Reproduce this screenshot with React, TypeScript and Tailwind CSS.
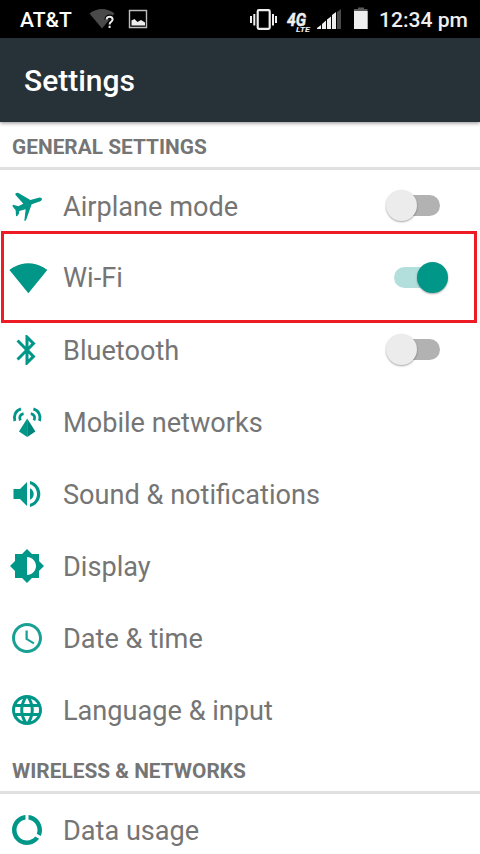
import type { ReactNode } from 'react';
import clsx from 'clsx';

type SettingsItem = {
  label: string;
  icon: ReactNode;
  enabled?: boolean;
  highlighted?: boolean;
};

// 24-unit glyph drawn at 36px
function Icon({ children }: { children: ReactNode }) {
  return (
    <svg viewBox="0 0 24 24" className="h-9 w-9 overflow-visible" fill="currentColor">
      {children}
    </svg>
  );
}

const generalItems: SettingsItem[] = [
  {
    label: 'Airplane mode',
    enabled: false,
    icon: (
      <svg viewBox="0 0 108 108" className="h-9 w-9" fill="currentColor">
        <path d="M20 16 27 14 64 36 89 29Q98 27 99 33 99 37 94 40L68 49 51 97 46 99 50 64 31 69Q31 80 24 85L21 84 20 67 10 54 12 50 28 55 43 47 19 20z" />
      </svg>
    ),
  },
  {
    label: 'Wi-Fi',
    enabled: true,
    highlighted: true,
    icon: (
      <Icon>
        <path d="M12.9 22.1 25.5 6.7C25 6.3 20.1 2.2 12.9 2.2S.8 6.3.3 6.7z" />
      </Icon>
    ),
  },
  {
    label: 'Bluetooth',
    enabled: false,
    icon: (
      <Icon>
        <path d="M17.71 7.71L12 2h-1v7.59L6.41 5 5 6.41 10.59 12 5 17.59 6.41 19 11 14.41V22h1l5.71-5.71-4.3-4.29 4.3-4.29zM13 5.83l1.88 1.88L13 9.59V5.83zm1.88 10.46L13 18.17v-3.76l1.88 1.88z" />
      </Icon>
    ),
  },
  {
    label: 'Mobile networks',
    icon: (
      <svg viewBox="0 0 36 36" className="h-9 w-9" fill="none">
        <path d="M18.200 14.500 10 27.500 18.200 33z" fill="#009688" />
        <path d="M18.200 14.500 26.400 27.500 18.200 33z" fill="#00857a" />
        <path
          d="M12 4.900C6.500 6.600 4.300 11.800 5.900 17M14.600 9.600C10.700 10.400 10 13.400 11.400 16.400M24.400 4.900C29.900 6.600 32.100 11.800 30.500 17M21.800 9.600C25.700 10.400 26.400 13.400 25 16.400"
          stroke="currentColor"
          strokeWidth="2.800"
        />
      </svg>
    ),
  },
  {
    label: 'Sound & notifications',
    icon: (
      <svg viewBox="0 0 36 36" className="h-9 w-9" fill="currentColor">
        <path d="M4.500 13v10h6.500L18 30V6l-7 7zM21 12.200v11.600c2.400-1.200 3.700-3.300 3.700-5.800s-1.300-4.600-3.700-5.800zM21 5v3.200c4.300 1.200 7 5.100 7 9.800s-2.700 8.600-7 9.800V31c6-1.400 10.300-6.800 10.300-13S27 6.400 21 5z" />
      </svg>
    ),
  },
  {
    label: 'Display',
    icon: (
      <Icon>
        <path d="M20 15.310L23.310 12 20 8.690V4h-4.690L12 .690 8.690 4H4v4.690L.690 12 4 15.310V20h4.690L12 23.310 15.310 20H20v-4.690zM12 18V6c3.310 0 6 2.690 6 6s-2.690 6-6 6z" />
      </Icon>
    ),
  },
  {
    label: 'Date & time',
    icon: (
      <Icon>
        <path
          fillOpacity=".9"
          d="M11.990 2C6.470 2 2 6.480 2 12s4.470 10 9.990 10C17.520 22 22 17.520 22 12S17.520 2 11.990 2zM12 20c-4.420 0-8-3.580-8-8s3.580-8 8-8 8 3.580 8 8-3.580 8-8 8zm.5-13H11v6l5.250 3.150.75-1.230-4.500-2.670z"
        />
      </Icon>
    ),
  },
  {
    label: 'Language & input',
    icon: (
      <Icon>
        <path d="M11.990 2C6.470 2 2 6.480 2 12s4.470 10 9.990 10C17.520 22 22 17.520 22 12S17.520 2 11.990 2zm6.930 6h-2.950c-.32-1.250-.78-2.450-1.380-3.560 1.840.63 3.370 1.910 4.330 3.560zM12 4.040c.83 1.200 1.480 2.530 1.910 3.960h-3.820c.43-1.430 1.080-2.760 1.910-3.960zM4.260 14C4.100 13.360 4 12.690 4 12s.1-1.360.26-2h3.380c-.08.66-.14 1.320-.14 2 0 .68.06 1.340.14 2H4.260zm.82 2h2.950c.32 1.250.78 2.450 1.380 3.560-1.840-.63-3.370-1.900-4.330-3.560zm2.950-8H5.080c.96-1.660 2.490-2.930 4.330-3.560C8.810 5.550 8.350 6.750 8.030 8zM12 19.960c-.83-1.200-1.480-2.530-1.910-3.960h3.820c-.43 1.430-1.080 2.760-1.910 3.960zM14.340 14H9.660c-.09-.66-.16-1.320-.16-2 0-.68.07-1.350.16-2h4.680c.09.65.16 1.320.16 2 0 .68-.07 1.340-.16 2zm.25 5.560c.6-1.110 1.060-2.310 1.380-3.560h2.950c-.96 1.650-2.490 2.930-4.330 3.560zM16.360 14c.08-.66.14-1.320.14-2 0-.68-.06-1.340-.14-2h3.380c.16.64.26 1.310.26 2s-.1 1.360-.26 2h-3.380z" />
      </Icon>
    ),
  },
];

const wirelessItems: SettingsItem[] = [
  {
    label: 'Data usage',
    icon: (
      <Icon>
        <path d="M13 2.050v3.030c3.390.49 6 3.390 6 6.920 0 .9-.18 1.750-.48 2.540l2.600 1.530c.56-1.240.88-2.620.88-4.070 0-5.180-3.950-9.450-9-9.950zM12 19c-3.870 0-7-3.130-7-7 0-3.530 2.610-6.430 6-6.920V2.050c-5.060.5-9 4.760-9 9.950 0 5.520 4.470 10 9.990 10 3.310 0 6.240-1.610 8.060-4.090l-2.600-1.530C16.170 17.980 14.210 19 12 19z" />
      </Icon>
    ),
  },
];

function Toggle({ on }: { on: boolean }) {
  return (
    <div
      className={clsx('mb-px flex h-[31px] w-[62px] items-center', on ? 'justify-end' : 'justify-start')}
    >
      <div className={clsx('h-[21px] w-[46px] rounded-full', on ? '-mr-[23px] bg-[#b2dfdb]' : 'order-2 -ml-[23px] bg-[#b2b2b2]')} />
      <div
        className={clsx(
          'z-10 h-[31px] w-[31px] shrink-0 rounded-full shadow-[0_1px_2px_rgba(0,0,0,0.35)]',
          on ? 'bg-[#009688]' : 'bg-[#ececec]'
        )}
      />
    </div>
  );
}

function SettingsRow({ item }: { item: SettingsItem }) {
  return (
    <li className="relative flex h-[72px] shrink-0 items-center pr-8 pl-[9px] text-[#009688]">
      {item.icon}
      <span
        className={clsx(
          'ml-[18px] flex-1 text-[27.13px] leading-8 text-[#757575]',
          !item.highlighted && 'pt-0.5'
        )}
      >
        {item.label}
      </span>
      {item.enabled !== undefined && <Toggle on={item.enabled} />}
      {item.highlighted && (
        <div className="absolute -top-[11px] left-px h-[92px] w-[476px] border-3 border-[#ed1c24]" />
      )}
    </li>
  );
}

function SettingsSection({ title, items }: { title: string; items: SettingsItem[] }) {
  return (
    <section className="shrink-0">
      <h2 className="flex h-12 items-center border-b-3 border-[#e0e0e0] pt-[5px] pl-3 text-[20.85px] leading-6 font-bold text-[#757575]">
        {title}
      </h2>
      <ul>
        {items.map((item) => (
          <SettingsRow key={item.label} item={item} />
        ))}
      </ul>
    </section>
  );
}

function StatusBar() {
  return (
    <div className="flex h-[38px] shrink-0 items-center bg-black pr-3 pl-5 text-white">
      <span className="w-[68px] pt-px text-[21px] leading-6 font-medium">AT&T</span>
      <svg viewBox="0 0 62 38" className="h-[38px] w-[62px]">
        <path d="M14 28.500 1.500 13.500C9 7.500 19 7.500 26.500 13.500z" fill="#4a4a4a" />
        <path
          d="M18.600 19.500C18.600 15.700 24.600 15.900 24.600 19.500C24.600 21.900 21.600 21.800 21.600 24.400M21.600 25.800v2.200"
          fill="none"
          stroke="#000"
          strokeWidth="4.500"
        />
        <path
          d="M18.600 19.500C18.600 15.700 24.600 15.900 24.600 19.500C24.600 21.900 21.600 21.800 21.600 24.400M21.600 25.800v2.200"
          fill="none"
          stroke="#eee"
          strokeWidth="2"
        />
        <path d="M41.500 10.500h17v17h-17z" fill="none" stroke="#bdbdbd" strokeWidth="1.400" />
        <path d="M43.500 25.500v-5l3-1.500 3 3 3.500-2 4 2.500v3z" fill="#eee" />
      </svg>
      <svg viewBox="0 0 120 38" className="ml-auto h-[38px] w-[120px]" fill="#eee">
        <rect x="7.700" y="10.200" width="12" height="18.600" rx="1.200" fill="none" stroke="#eee" strokeWidth="2.200" />
        <path d="M0 16h2v7H0zM3.300 14h2v11.500h-2zM22 14h2v11.500h-2zM25 16h2v7h-2z" />
        <text
          x="37"
          y="25.500"
          fontSize="18.500"
          fontWeight="700"
          fontStyle="italic"
          stroke="#eee"
          strokeWidth=".5"
          textLength="19"
          lengthAdjust="spacingAndGlyphs"
        >
          4G
        </text>
        <text x="46" y="32" fontSize="7.500" fontWeight="700" fontStyle="italic" textLength="14" lengthAdjust="spacingAndGlyphs">
          LTE
        </text>
        <path d="M67 29v-1l4-3v4zM72 29v-5l4-3.500V29zM77 29v-9.500l4-3V29zM82 29V15l4-3v17z" />
        <path d="M87 29V12l4-3v20z" fill="#4a4a4a" />
        <path d="M108 7.500h6V9h3.500v2H104V9h4z" fill="#5a5a5a" />
        <path d="M104 11h13.700v18H104z" />
      </svg>
      <span className="ml-[9px] w-[89px] pt-px text-[21.1px] leading-6 font-medium whitespace-nowrap text-[#eee]">12:34 pm</span>
    </div>
  );
}

export default function App() {
  return (
    <div className="flex h-[854px] w-[480px] flex-col overflow-hidden bg-white font-['Roboto',sans-serif]">
      <StatusBar />
      <header className="z-10 flex h-[84px] shrink-0 items-center bg-[#263238] pl-6 shadow-[0_1px_4px_rgba(0,0,0,0.45)]">
        <h1 className="text-[30px] font-medium text-white">Settings</h1>
      </header>
      <main className="flex flex-1 flex-col overflow-hidden">
        <SettingsSection title="GENERAL SETTINGS" items={generalItems} />
        <SettingsSection title="WIRELESS & NETWORKS" items={wirelessItems} />
      </main>
    </div>
  );
}
